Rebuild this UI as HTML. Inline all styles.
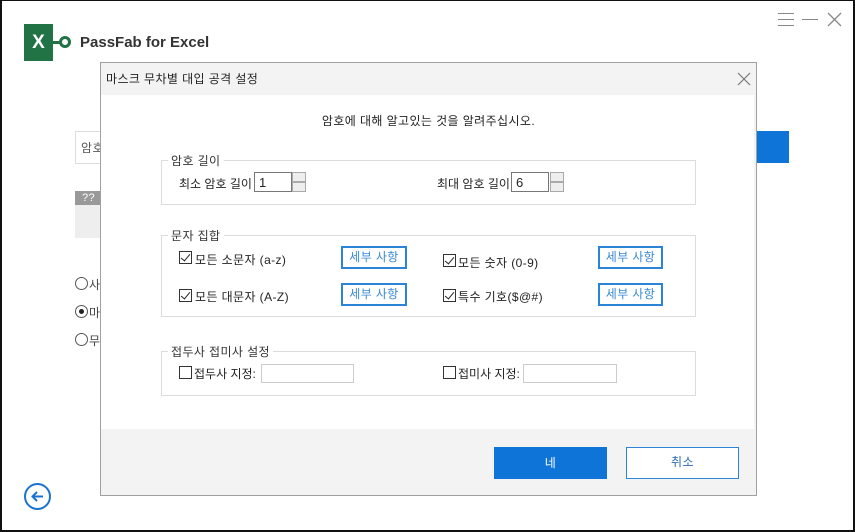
<!DOCTYPE html><html><head><meta charset="utf-8"><style>
*{margin:0;padding:0;box-sizing:border-box}
body{width:855px;height:532px;overflow:hidden;background:#fff;font-family:"Liberation Sans","Noto Sans CJK KR",sans-serif;font-size:12px;color:#222;position:relative;letter-spacing:0.4px}
.a{position:absolute;white-space:nowrap}
.gb{position:absolute;border:1px solid #dcdcdc}
.gl{position:absolute;background:#fff;padding:0 3px;font-size:12px;top:-9px;left:6px;color:#333;white-space:nowrap}
.cb{position:absolute;width:13px;height:13px;border:1px solid #333;background:#fff}
.cb.c::after{content:"";position:absolute;left:3px;top:0px;width:4px;height:8px;border:solid #222;border-width:0 1.5px 1.5px 0;transform:rotate(40deg)}
.btn{position:absolute;border:2px solid #2b84d8;color:#3a8ad6;text-align:center;font-size:12px;background:#fff}
.inp{position:absolute;border:1px solid #ccc;background:#fff}
.sp{position:absolute;width:14px;border:1px solid #aaa;background:#eee}
</style></head><body>
<div class="a" style="left:0;top:0;width:855px;height:532px;border:2px solid #111;border-top-width:1px"></div>
<div class="a" style="left:24px;top:24px;width:29px;height:37px;background:#217346;color:#fff;font-weight:bold;font-size:19px;text-align:center;line-height:37px;letter-spacing:0">X</div>
<div class="a" style="left:52px;top:41px;width:10px;height:3px;background:#217346"></div>
<div class="a" style="left:59px;top:36px;width:12px;height:12px;border:3px solid #217346;border-radius:50%"></div>
<div class="a" style="left:80px;top:34px;font-size:15px;font-weight:bold;color:#333;letter-spacing:0">PassFab for Excel</div>
<div class="a" style="left:778px;top:13px;width:16px;height:13px;border-top:1px solid #888;border-bottom:1px solid #888"></div>
<div class="a" style="left:778px;top:19px;width:16px;height:1px;background:#888"></div>
<div class="a" style="left:802px;top:19px;width:16px;height:1px;background:#888"></div>
<svg class="a" style="left:827px;top:12px" width="15" height="15"><path d="M1 1L14 14M14 1L1 14" stroke="#888" stroke-width="1.3"/></svg>
<div class="a" style="left:75px;top:131px;width:40px;height:33px;border:1px solid #ddd;padding:7px 5px;color:#555">암호</div>
<div class="a" style="left:75px;top:191px;width:26px;height:14px;background:#999;color:#fff;font-size:11px;line-height:14px;padding-left:7px">??</div>
<div class="a" style="left:75px;top:205px;width:26px;height:33px;background:#eee"></div>
<div class="a" style="left:75px;top:277px;width:13px;height:13px;border:1px solid #555;border-radius:50%"></div>
<div class="a" style="left:89px;top:276px;color:#444">사</div>
<div class="a" style="left:75px;top:305px;width:13px;height:13px;border:1px solid #555;border-radius:50%"><div class="a" style="left:3px;top:3px;width:5px;height:5px;border-radius:50%;background:#222"></div></div>
<div class="a" style="left:89px;top:304px;color:#444">마</div>
<div class="a" style="left:75px;top:333px;width:13px;height:13px;border:1px solid #555;border-radius:50%"></div>
<div class="a" style="left:89px;top:332px;color:#444">무</div>
<div class="a" style="left:757px;top:131px;width:32px;height:32px;background:#0f74d8"></div>
<div class="a" style="left:24px;top:483px;width:27px;height:27px;border:2px solid #1a73d0;border-radius:50%"></div>
<svg class="a" style="left:24px;top:483px" width="27" height="27"><path d="M19 13.5H9M13 9L8.5 13.5L13 18" stroke="#1a73d0" stroke-width="2" fill="none"/></svg>

<div class="a" style="left:100px;top:62px;width:657px;height:434px;border:1px solid #a0a0a0;background:#f3f3f3">
<div class="a" style="left:0;top:32px;width:653px;height:334px;background:#fff"></div>
</div>
<div class="a" style="left:106px;top:70px;font-size:12px;color:#222">마스크 무차별 대입 공격 설정</div>
<svg class="a" style="left:737px;top:72px" width="14" height="14"><path d="M1 1L13 13M13 1L1 13" stroke="#777" stroke-width="1.2"/></svg>
<div class="a" style="left:100px;top:112px;width:657px;text-align:center">암호에 대해 알고있는 것을 알려주십시오.</div>

<div class="gb" style="left:161px;top:160px;width:535px;height:45px"><span class="gl">암호 길이</span></div>
<div class="a" style="left:179px;top:175px;letter-spacing:0">최소 암호 길이</div>
<div class="inp" style="left:254px;top:172px;width:38px;height:20px;border-color:#777;padding:2px 4px;font-size:13px">1</div>
<div class="sp" style="left:292px;top:172px;height:10px"></div><div class="sp" style="left:292px;top:182px;height:10px"></div>
<div class="a" style="left:437px;top:175px;letter-spacing:0">최대 암호 길이</div>
<div class="inp" style="left:511px;top:172px;width:38px;height:20px;border-color:#777;padding:2px 4px;font-size:13px">6</div>
<div class="sp" style="left:550px;top:172px;height:10px"></div><div class="sp" style="left:550px;top:182px;height:10px"></div>

<div class="gb" style="left:161px;top:235px;width:535px;height:82px"><span class="gl">문자 집합</span></div>
<div class="cb c" style="left:179px;top:251px"></div><div class="a" style="left:195px;top:251px">모든 소문자 (a-z)</div>
<div class="btn" style="left:341px;top:246px;width:66px;height:23px;line-height:19px">세부 사항</div>
<div class="cb c" style="left:443px;top:254px"></div><div class="a" style="left:458px;top:254px">모든 숫자 (0-9)</div>
<div class="btn" style="left:598px;top:246px;width:65px;height:23px;line-height:19px">세부 사항</div>
<div class="cb c" style="left:179px;top:289px"></div><div class="a" style="left:195px;top:288px">모든 대문자 (A-Z)</div>
<div class="btn" style="left:341px;top:283px;width:66px;height:23px;line-height:19px">세부 사항</div>
<div class="cb c" style="left:443px;top:289px"></div><div class="a" style="left:458px;top:288px">특수 기호($@#)</div>
<div class="btn" style="left:598px;top:283px;width:65px;height:23px;line-height:19px">세부 사항</div>

<div class="gb" style="left:161px;top:351px;width:535px;height:45px"><span class="gl">접두사 접미사 설정</span></div>
<div class="cb" style="left:179px;top:366px"></div><div class="a" style="left:194px;top:365px;letter-spacing:0">접두사 지정:</div>
<div class="inp" style="left:261px;top:364px;width:93px;height:19px"></div>
<div class="cb" style="left:443px;top:366px"></div><div class="a" style="left:458px;top:365px;letter-spacing:0">접미사 지정:</div>
<div class="inp" style="left:523px;top:364px;width:94px;height:19px"></div>

<div class="a" style="left:494px;top:447px;width:113px;height:32px;background:#0f74d8;color:#fff;text-align:center;line-height:32px">네</div>
<div class="btn" style="left:626px;top:447px;width:113px;height:32px;line-height:28px;border-width:1.5px;color:#2b6cb0">취소</div>
</body></html>
